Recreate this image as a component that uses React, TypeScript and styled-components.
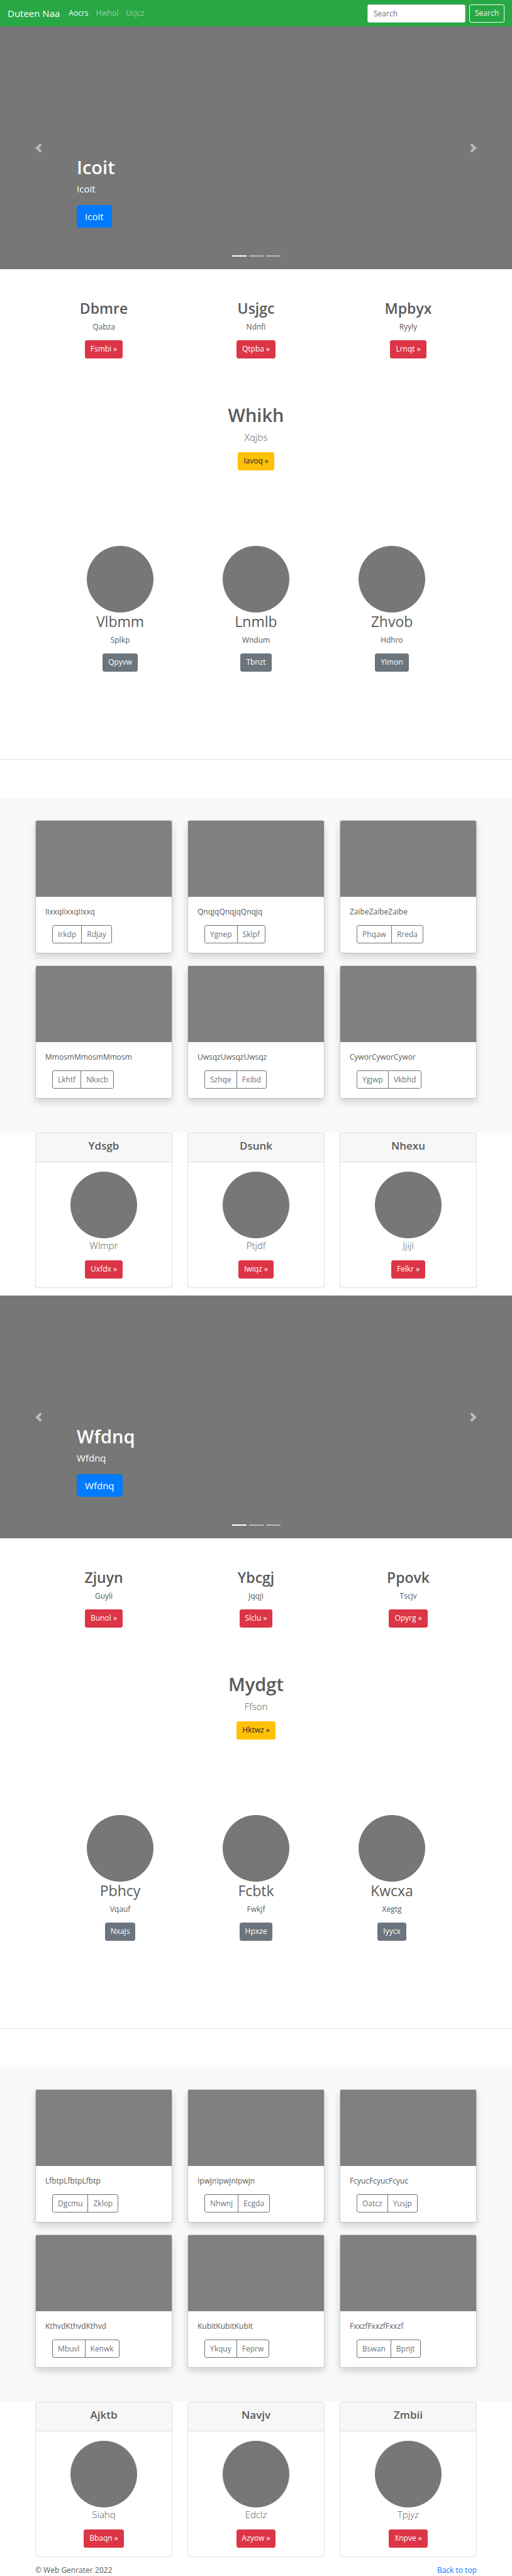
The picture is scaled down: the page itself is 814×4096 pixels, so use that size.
import React from "react";
import styled, { createGlobalStyle, css } from "styled-components";

const GlobalStyle = createGlobalStyle`
  *, *::before, *::after { box-sizing: border-box; }
  body {
    margin: 0;
    background: #fff;
    color: #5a5a5a;
    font-family: "Open Sans", "Noto Sans", sans-serif;
    font-size: 12px;
    line-height: 18px;
  }
  h1, h2, h4, p { margin: 0; }
  a { text-decoration: none; }
  button, input { font-family: inherit; }
`;

/* ---------- shared parts ---------- */

type Tone = "primary" | "danger" | "warning" | "secondary";

const tones: Record<Tone, { bg: string; fg: string }> = {
  primary: { bg: "#007bff", fg: "#fff" },
  danger: { bg: "#dc3545", fg: "#fff" },
  warning: { bg: "#ffc107", fg: "#212529" },
  secondary: { bg: "#6c757d", fg: "#fff" },
};

const ButtonLink = styled.a<{ $tone: Tone; $large?: boolean }>`
  display: inline-block;
  border: 1px solid ${(p) => tones[p.$tone].bg};
  border-radius: 3px;
  background: ${(p) => tones[p.$tone].bg};
  color: ${(p) => tones[p.$tone].fg};
  padding: 4px 8px 5px;
  font-size: 12px;
  line-height: 18px;
  ${(p) =>
    p.$large &&
    css`
      padding: 6px 12px;
      border-radius: 4px;
      font-size: 15px;
      line-height: 22px;
    `}
`;

const Circle = styled.div`
  width: 106px;
  height: 106px;
  border-radius: 50%;
  background: #777;
`;

const Heading = styled.h2<{ $light?: boolean }>`
  margin-bottom: 6px;
  font-size: 23px;
  line-height: 29px;
  font-weight: ${(p) => (p.$light ? 400 : 600)};
`;

const Text = styled.p`
  margin-bottom: 12px;
`;

const Lead = styled.p`
  margin-bottom: 12px;
  font-size: 15px;
  line-height: 23px;
  font-weight: 300;
`;

const Column = styled.div`
  display: flex;
  flex-direction: column;
  align-items: center;
`;

const Row = styled.div`
  display: grid;
  grid-template-columns: repeat(3, 1fr);
  column-gap: 24px;
`;

/* ---------- navigation ---------- */

const Navbar = styled.nav`
  display: flex;
  align-items: center;
  height: 42px;
  padding: 0 12px;
  background: #28a745;
`;

const Brand = styled.a`
  margin-right: 8px;
  color: #fff;
  font-size: 15px;
  line-height: 22px;
`;

const NavLink = styled.a<{ $active?: boolean }>`
  padding: 6px;
  color: ${(p) => (p.$active ? "#fff" : "rgba(255, 255, 255, 0.5)")};
`;

const SearchForm = styled.form`
  display: flex;
  gap: 6px;
  margin-left: auto;
`;

const SearchInput = styled.input`
  width: 156px;
  height: 29px;
  padding: 4px 9px;
  border: 1px solid #ced4da;
  border-radius: 3px;
  background: #fff;
  font-size: 12px;
  &::placeholder {
    color: #6c757d;
    opacity: 1;
  }
`;

const SearchButton = styled.button`
  height: 29px;
  padding: 0 8px;
  border: 1px solid #f8f9fa;
  border-radius: 3px;
  background: transparent;
  color: #f8f9fa;
  font-size: 12px;
  line-height: 18px;
`;

/* ---------- carousel ---------- */

const Hero = styled.section`
  position: relative;
  display: flex;
  flex-direction: column;
  justify-content: flex-end;
  height: 386px;
  padding: 0 15% 66px;
  background: #777;
  color: #fff;
`;

const DisplayTitle = styled.h1`
  margin-bottom: 6px;
  font-size: 29px;
  line-height: 36px;
  font-weight: 600;
`;

const HeroText = styled.p`
  margin-bottom: 15px;
  font-size: 15px;
  line-height: 21px;
`;

const Control = styled.button<{ $side: "left" | "right" }>`
  position: absolute;
  top: 0;
  bottom: 0;
  ${(p) => p.$side}: 0;
  width: 15%;
  display: flex;
  align-items: center;
  justify-content: center;
  padding: 0;
  border: 0;
  background: none;
  color: #fff;
  opacity: 0.5;
`;

const Indicators = styled.div`
  position: absolute;
  left: 0;
  right: 0;
  bottom: 20px;
  display: flex;
  justify-content: center;
  gap: 4px;
`;

const Indicator = styled.button<{ $active?: boolean }>`
  width: 23px;
  height: 2px;
  padding: 0;
  border: 0;
  background: #fff;
  opacity: ${(p) => (p.$active ? 1 : 0.5)};
`;

function Carousel({ label }: { label: string }) {
  return (
    <Hero>
      <DisplayTitle>{label}</DisplayTitle>
      <HeroText>{label}</HeroText>
      <div>
        <ButtonLink $tone="primary" $large href="#">
          {label}
        </ButtonLink>
      </div>
      <Control $side="left" type="button" aria-label="Previous">
        <svg width="15" height="15" viewBox="0 0 8 8" fill="currentColor">
          <path d="M5.25 0l-4 4 4 4 1.5-1.5-2.5-2.5 2.5-2.5-1.5-1.5z" />
        </svg>
      </Control>
      <Control $side="right" type="button" aria-label="Next">
        <svg width="15" height="15" viewBox="0 0 8 8" fill="currentColor">
          <path d="M2.75 0l-1.5 1.5 2.5 2.5-2.5 2.5 1.5 1.5 4-4-4-4z" />
        </svg>
      </Control>
      <Indicators>
        <Indicator $active type="button" aria-label="Slide 1" />
        <Indicator type="button" aria-label="Slide 2" />
        <Indicator type="button" aria-label="Slide 3" />
      </Indicators>
    </Hero>
  );
}

/* ---------- text blocks ---------- */

const Features = styled.section`
  padding: 48px 56px 72px;
`;

const Callout = styled(Column)`
  padding-bottom: 120px;
`;

const People = styled.section`
  display: grid;
  grid-template-columns: repeat(3, 1fr);
  padding: 0 83px 139px;
`;

const Divider = styled.hr`
  margin: 0 0 60px;
  border: 0;
  border-top: 1px solid rgba(0, 0, 0, 0.1);
`;

/* ---------- album ---------- */

const Album = styled.section`
  padding: 36px 56px 54px;
  background: #f8f9fa;
`;

const AlbumGrid = styled(Row)`
  row-gap: 19px;
`;

const PhotoCard = styled.article`
  border: 1px solid rgba(0, 0, 0, 0.125);
  border-radius: 3px;
  background: #fff;
  background-clip: padding-box;
  box-shadow: 0 6px 12px rgba(0, 0, 0, 0.15);
`;

const Photo = styled.div`
  height: 121px;
  border-radius: 2px 2px 0 0;
  background: #808080;
`;

const PhotoBody = styled.div`
  padding: 15px;
`;

const ButtonGroup = styled.div`
  display: flex;
  padding-left: 11px;
`;

const GroupButton = styled.button`
  height: 29px;
  padding: 0 8px;
  border: 1px solid #6c757d;
  background: transparent;
  color: #6c757d;
  font-size: 12px;
  line-height: 18px;
  &:first-child {
    border-radius: 3px 0 0 3px;
  }
  &:last-child {
    margin-left: -1px;
    border-radius: 0 3px 3px 0;
  }
`;

/* ---------- plan cards ---------- */

const Plans = styled(Row)`
  padding: 0 56px 12px;
`;

const PlanCard = styled.article`
  border: 1px solid rgba(0, 0, 0, 0.125);
  border-radius: 3px;
`;

const PlanHeader = styled.header`
  padding: 9px 15px 14px;
  border-bottom: 1px solid rgba(0, 0, 0, 0.125);
  background: rgba(0, 0, 0, 0.03);
  text-align: center;
`;

const PlanTitle = styled.h4`
  font-size: 17px;
  line-height: 22px;
  font-weight: 600;
`;

const PlanBody = styled(Column)`
  padding: 15px 15px 14px;
`;

const Footer = styled.footer`
  display: flex;
  justify-content: space-between;
  padding: 0 56px;
`;

const FooterLink = styled.a`
  color: #007bff;
`;

/* ---------- content ---------- */

type Triple = [string, string, string];

interface Block {
  hero: string;
  features: Triple[];
  callout: Triple;
  people: Triple[];
  album: Triple[];
  plans: Triple[];
}

const blocks: Block[] = [
  {
    hero: "Icoit",
    features: [
      ["Dbmre", "Qabza", "Fsmbi"],
      ["Usjgc", "Ndnfi", "Qtpba"],
      ["Mpbyx", "Ryyly", "Lrnqt"],
    ],
    callout: ["Whikh", "Xqjbs", "Iavoq"],
    people: [
      ["Vlbmm", "Splkp", "Qpyvw"],
      ["Lnmlb", "Wndum", "Tbnzt"],
      ["Zhvob", "Hdhro", "Yimon"],
    ],
    album: [
      ["IixxqIixxqIixxq", "Irkdp", "Rdjay"],
      ["QnqjqQnqjqQnqjq", "Ygnep", "Sklpf"],
      ["ZaibeZaibeZaibe", "Phqaw", "Rreda"],
      ["MmosmMmosmMmosm", "Lkhtf", "Nkxcb"],
      ["UwsqzUwsqzUwsqz", "Szhqe", "Fxibd"],
      ["CyworCyworCywor", "Ygjwp", "Vkbhd"],
    ],
    plans: [
      ["Ydsgb", "Wlmpr", "Uxfdx"],
      ["Dsunk", "Ptjdf", "Iwiqz"],
      ["Nhexu", "Jjijl", "Felkr"],
    ],
  },
  {
    hero: "Wfdnq",
    features: [
      ["Zjuyn", "Guyli", "Bunol"],
      ["Ybcgj", "Jqqji", "Slclu"],
      ["Ppovk", "Tscjv", "Opyrg"],
    ],
    callout: ["Mydgt", "Ffson", "Hktwz"],
    people: [
      ["Pbhcy", "Vqauf", "Nxajs"],
      ["Fcbtk", "Fwkjf", "Hpxze"],
      ["Kwcxa", "Xegtg", "Iyycx"],
    ],
    album: [
      ["LfbtpLfbtpLfbtp", "Dgcmu", "Zklop"],
      ["IpwjnIpwjnIpwjn", "Nhwnj", "Ecgda"],
      ["FcyucFcyucFcyuc", "Oatcz", "Yusjp"],
      ["KthvdKthvdKthvd", "Mbuvl", "Kenwk"],
      ["KubitKubitKubit", "Ykquy", "Feprw"],
      ["FxxzfFxxzfFxxzf", "Bswan", "Bpnjt"],
    ],
    plans: [
      ["Ajktb", "Siahq", "Bbaqn"],
      ["Navjv", "Edclz", "Azyow"],
      ["Zmbii", "Tpjyz", "Xnpve"],
    ],
  },
];

function PageBlock({ block }: { block: Block }) {
  const [calloutTitle, calloutText, calloutAction] = block.callout;
  return (
    <>
      <Carousel label={block.hero} />
      <Features>
        <Row>
          {block.features.map(([title, text, action]) => (
            <Column key={title}>
              <Heading>{title}</Heading>
              <Text>{text}</Text>
              <ButtonLink $tone="danger" href="#">
                {action} »
              </ButtonLink>
            </Column>
          ))}
        </Row>
      </Features>
      <Callout>
        <DisplayTitle>{calloutTitle}</DisplayTitle>
        <Lead>{calloutText}</Lead>
        <ButtonLink $tone="warning" href="#">
          {calloutAction} »
        </ButtonLink>
      </Callout>
      <People>
        {block.people.map(([name, text, action]) => (
          <Column key={name}>
            <Circle />
            <Heading $light>{name}</Heading>
            <Text>{text}</Text>
            <ButtonLink $tone="secondary" href="#">
              {action}
            </ButtonLink>
          </Column>
        ))}
      </People>
      <Divider />
      <Album>
        <AlbumGrid>
          {block.album.map(([text, first, second]) => (
            <PhotoCard key={text}>
              <Photo />
              <PhotoBody>
                <Text>{text}</Text>
                <ButtonGroup>
                  <GroupButton type="button">{first}</GroupButton>
                  <GroupButton type="button">{second}</GroupButton>
                </ButtonGroup>
              </PhotoBody>
            </PhotoCard>
          ))}
        </AlbumGrid>
      </Album>
      <Plans>
        {block.plans.map(([title, text, action]) => (
          <PlanCard key={title}>
            <PlanHeader>
              <PlanTitle>{title}</PlanTitle>
            </PlanHeader>
            <PlanBody>
              <Circle />
              <Lead>{text}</Lead>
              <ButtonLink $tone="danger" href="#">
                {action} »
              </ButtonLink>
            </PlanBody>
          </PlanCard>
        ))}
      </Plans>
    </>
  );
}

export default function App() {
  return (
    <>
      <GlobalStyle />
      <Navbar>
        <Brand href="#">Duteen Naa</Brand>
        <NavLink $active href="#">
          Aocrs
        </NavLink>
        <NavLink href="#">Hwhol</NavLink>
        <NavLink href="#">Ucjcz</NavLink>
        <SearchForm onSubmit={(e) => e.preventDefault()}>
          <SearchInput type="text" placeholder="Search" aria-label="Search" />
          <SearchButton type="submit">Search</SearchButton>
        </SearchForm>
      </Navbar>
      <main>
        {blocks.map((block) => (
          <PageBlock key={block.hero} block={block} />
        ))}
      </main>
      <Footer>
        <span>© Web Genrater 2022</span>
        <FooterLink href="#">Back to top</FooterLink>
      </Footer>
    </>
  );
}
